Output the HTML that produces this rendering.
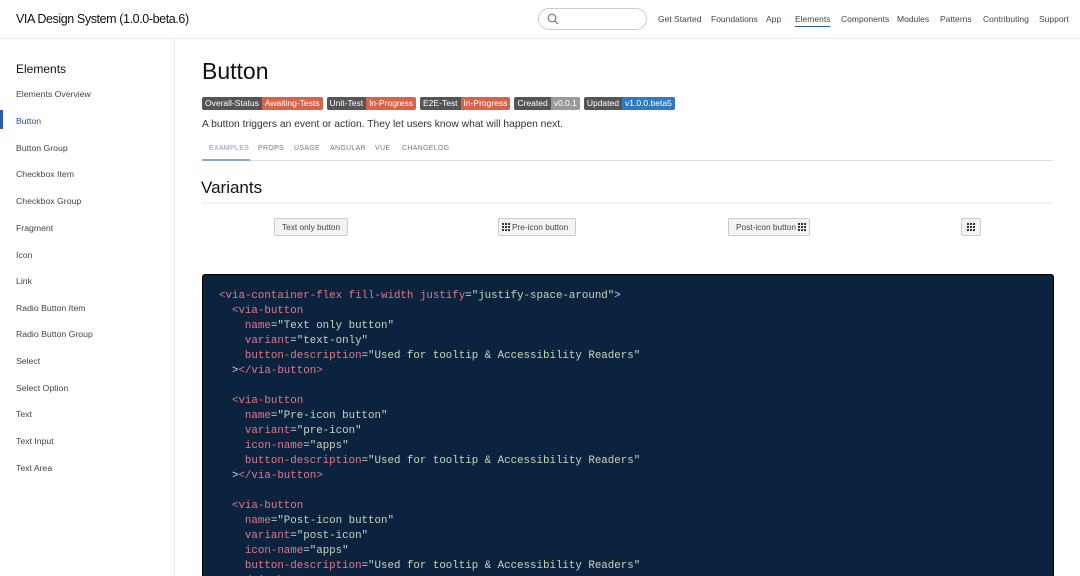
<!DOCTYPE html>
<html><head><meta charset="utf-8"><style>
*{box-sizing:border-box;margin:0;padding:0}
html,body{width:1080px;height:576px;overflow:hidden}
body{background:#fff;font-family:"Liberation Sans",sans-serif;color:#222;position:relative}
.hdr{position:absolute;left:0;top:0;width:1080px;height:39px;border-bottom:1px solid #ececec}
.brand{position:absolute;left:16px;top:12px;font-size:12.5px;color:#111;letter-spacing:-0.4px}
.search{position:absolute;left:538px;top:8px;width:109px;height:22px;border:1px solid #ccc;border-radius:11px}
.nav{position:absolute;top:14px;font-size:8.5px;color:#444}
.side{position:absolute;left:0;top:39px;width:175px;height:537px;border-right:1px solid #ececec}
.side h3{position:absolute;left:16px;top:23px;font-size:12px;font-weight:normal;color:#111}
.si{position:absolute;left:16px;font-size:8.7px;color:#444}
.act{position:absolute;left:0;top:71px;width:3px;height:19px;background:#2a5db0}
h1{position:absolute;left:202px;top:58px;font-size:23px;font-weight:normal;color:#111}
.badges{position:absolute;left:202px;top:97px;display:flex;gap:4px;font-size:8.5px;color:#fff}
.b{display:flex;border-radius:2px;overflow:hidden;height:13px;line-height:13px}
.b span{padding:0 3px}
.k{background:#555}.o{background:#d9634a}.g{background:#9a9a9a}.bl{background:#2f7bbf}
.desc{position:absolute;left:202px;top:119px;font-size:10.3px;color:#333}
.tabs{position:absolute;left:202px;top:145px;width:851px;height:16px;border-bottom:1px solid #ddd;font-size:7px;color:#777;letter-spacing:.3px}
.tabs span{position:absolute;top:0}
.tabs .u{position:absolute;left:0;top:14px;width:48px;height:2px;background:#8aa8d8}
h2{position:absolute;left:201px;top:178px;font-size:17px;font-weight:normal;color:#111}
.hr{position:absolute;left:202px;top:202px;width:851px;height:2px;background:#f2f2f2}
.btn{position:absolute;top:218px;height:18px;border:1px solid #ccc;border-radius:2px;background:#f3f3f3;font-size:8.3px;color:#444;line-height:16px;padding:0 7px;display:flex;align-items:center;gap:2px}
.ic{display:inline-grid;grid-template-columns:repeat(3,2px);gap:1px}
.ic i{width:2px;height:2px;background:#333}
.code{position:absolute;left:202px;top:274px;width:852px;height:320px;background:#0c2340;border-radius:3px;border:1px solid #000}
pre{position:absolute;left:16px;top:14px;font-family:"Liberation Mono",monospace;font-size:10.8px;line-height:15px;color:#d9d9d9}
.t{color:#e07a85}.a{color:#e07a85}.s{color:#c9d6b8}
</style></head><body>
<div class="hdr">
<div class="brand">VIA Design System (1.0.0-beta.6)</div>
<div class="search"><svg width="12" height="12" style="position:absolute;left:8px;top:4px" viewBox="0 0 12 12"><circle cx="5" cy="5" r="3.8" fill="none" stroke="#777" stroke-width="1.2"/><path d="M8 8l3 3" stroke="#777" stroke-width="1.2"/></svg></div>
<span class="nav" style="left:658px">Get Started</span>
<span class="nav" style="left:711px">Foundations</span>
<span class="nav" style="left:766px">App</span>
<span class="nav" style="left:795px;border-bottom:1px solid #2a5db0;padding-bottom:2px">Elements</span>
<span class="nav" style="left:841px">Components</span>
<span class="nav" style="left:897px">Modules</span>
<span class="nav" style="left:940px">Patterns</span>
<span class="nav" style="left:983px">Contributing</span>
<span class="nav" style="left:1039px">Support</span>
</div>
<div class="side">
<h3>Elements</h3>
<div class="act"></div>
<span class="si" style="top:50px">Elements Overview</span>
<span class="si" style="top:77px;color:#2a4ea0">Button</span>
<span class="si" style="top:104px">Button Group</span>
<span class="si" style="top:130px">Checkbox Item</span>
<span class="si" style="top:157px">Checkbox Group</span>
<span class="si" style="top:184px">Fragment</span>
<span class="si" style="top:211px">Icon</span>
<span class="si" style="top:237px">Link</span>
<span class="si" style="top:264px">Radio Button Item</span>
<span class="si" style="top:290px">Radio Button Group</span>
<span class="si" style="top:317px">Select</span>
<span class="si" style="top:344px">Select Option</span>
<span class="si" style="top:370px">Text</span>
<span class="si" style="top:397px">Text Input</span>
<span class="si" style="top:424px">Text Area</span>
</div>
<h1>Button</h1>
<div class="badges">
<div class="b"><span class="k">Overall-Status</span><span class="o">Awaiting-Tests</span></div>
<div class="b"><span class="k">Unit-Test</span><span class="o">In-Progress</span></div>
<div class="b"><span class="k">E2E-Test</span><span class="o">In-Progress</span></div>
<div class="b"><span class="k">Created</span><span class="g">v0.0.1</span></div>
<div class="b"><span class="k">Updated</span><span class="bl">v1.0.0.beta5</span></div>
</div>
<div class="desc">A button triggers an event or action. They let users know what will happen next.</div>
<div class="tabs"><span style="left:7px;color:#7a9ad0">EXAMPLES</span><span style="left:56px">PROPS</span><span style="left:92px">USAGE</span><span style="left:128px">ANGULAR</span><span style="left:173px">VUE</span><span style="left:200px">CHANGELOG</span><div class="u"></div></div>
<h2>Variants</h2>
<div class="hr"></div>
<div class="btn" style="left:274px">Text only button</div>
<div class="btn" style="left:498px;padding:0 7px 0 3px"><span class="ic"><i></i><i></i><i></i><i></i><i></i><i></i><i></i><i></i><i></i></span>Pre-icon button</div>
<div class="btn" style="left:728px;padding:0 3px 0 7px">Post-icon button<span class="ic"><i></i><i></i><i></i><i></i><i></i><i></i><i></i><i></i><i></i></span></div>
<div class="btn" style="left:961px;padding:0 5px"><span class="ic"><i></i><i></i><i></i><i></i><i></i><i></i><i></i><i></i><i></i></span></div>
<div class="code"><pre><span class="t">&lt;via-container-flex</span> <span class="a">fill-width</span> <span class="a">justify</span>=<span class="s">"justify-space-around"</span>&gt;
  <span class="t">&lt;via-button</span>
    <span class="a">name</span>=<span class="s">"Text only button"</span>
    <span class="a">variant</span>=<span class="s">"text-only"</span>
    <span class="a">button-description</span>=<span class="s">"Used for tooltip &amp; Accessibility Readers"</span>
  &gt;<span class="t">&lt;/via-button&gt;</span>

  <span class="t">&lt;via-button</span>
    <span class="a">name</span>=<span class="s">"Pre-icon button"</span>
    <span class="a">variant</span>=<span class="s">"pre-icon"</span>
    <span class="a">icon-name</span>=<span class="s">"apps"</span>
    <span class="a">button-description</span>=<span class="s">"Used for tooltip &amp; Accessibility Readers"</span>
  &gt;<span class="t">&lt;/via-button&gt;</span>

  <span class="t">&lt;via-button</span>
    <span class="a">name</span>=<span class="s">"Post-icon button"</span>
    <span class="a">variant</span>=<span class="s">"post-icon"</span>
    <span class="a">icon-name</span>=<span class="s">"apps"</span>
    <span class="a">button-description</span>=<span class="s">"Used for tooltip &amp; Accessibility Readers"</span>
  &gt;<span class="t">&lt;/via-button&gt;</span></pre></div>
</body></html>
